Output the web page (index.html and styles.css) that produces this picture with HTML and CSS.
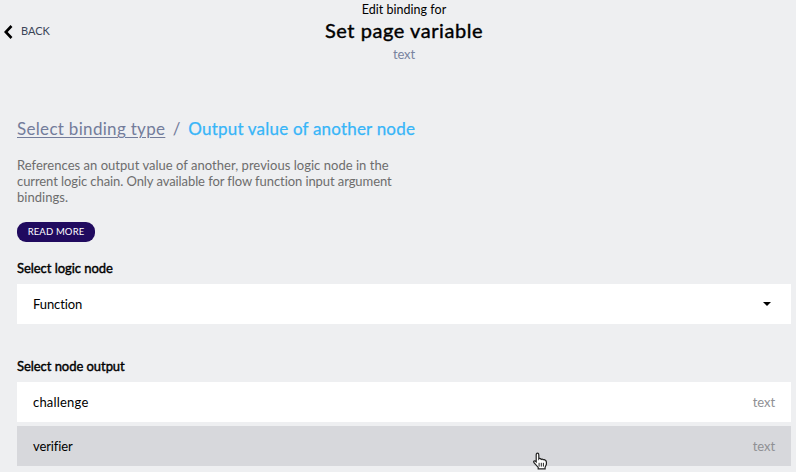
FILE: index.html
```html
<!DOCTYPE html>
<html lang="en">
<head>
<meta charset="utf-8">
<title>Edit binding</title>
<link rel="stylesheet" href="styles.css">
</head>
<body>
<header class="header">
  <a class="back">
    <svg class="back-icon" width="9" height="14" viewBox="0 0 9 14"><path d="M7.5 1 1.8 7l5.7 6" fill="none" stroke="#000" stroke-width="2.6"/></svg>
    <span class="back-label">BACK</span>
  </a>
  <div class="heading">
    <div class="eyebrow">Edit binding for</div>
    <h1 class="title">Set page variable</h1>
    <div class="type">text</div>
  </div>
</header>
<main class="content">
  <nav class="crumbs">
    <a class="crumb-link">Select binding type</a>
    <span class="crumb-slash">/</span>
    <span class="crumb-current">Output value of another node</span>
  </nav>
  <p class="description"><span class="wide">References an output value of another, previous logic node in the</span><br><span class="narrow">current logic chain. Only available for flow function input argument</span><br><span class="wide">bindings.</span></p>
  <a class="read-more"><span>READ MORE</span></a>
  <h2 class="label label-node">Select logic node</h2>
  <div class="row select">
    <span class="function">Function</span>
    <svg class="caret" width="8" height="4" viewBox="0 0 8 4"><path d="M0 0h8L4 4z"/></svg>
  </div>
  <h2 class="label label-output">Select node output</h2>
  <ul class="outputs">
    <li class="row"><span class="challenge">challenge</span><span class="kind">text</span></li>
    <li class="row hovered"><span class="verifier">verifier</span><span class="kind">text</span></li>
  </ul>
</main>
<svg class="cursor" width="17" height="18" viewBox="0 0 17 18"><path d="M4.2 9.8V3q0-1.8 1.3-1.8T6.8 3v4q.8-1 2-.2l.4.6q1.2-.8 2 .3 1.7-.6 2.3.9.9.1.9 1.5v2.2l-1.3 3v1.5H6.2v-1.4L2.2 11Q1.2 9.4 2 9q1-.5 2.2.8z" fill="#fff" stroke="#222" stroke-width="1.2"/><path d="M7.1 10.8v3.8M9.3 10.8v3.8M11.4 10.8v3.8" stroke="#222"/></svg>
</body>
</html>
```

FILE: styles.css
```css
* { box-sizing: border-box; }
body {
  margin: 0;
  height: 472px;
  overflow: hidden;
  background: #eeeff1;
  color: #000;
  font: 13px/16px Lato, "Liberation Sans", sans-serif;
  white-space: nowrap;
}
.header {
  display: grid;
  grid-template-columns: 1fr auto 1fr;
  height: 118px;
  padding: 2px 0 0 4px;
}
.back { display: flex; gap: 8px; height: 16px; margin-top: 21px; align-items: center; color: #3b4558; }
.back-icon { margin-top: 2px; }
.back-label { font-size: 11px; letter-spacing: 0; }
.heading { text-align: center; margin-left: 8px; }
.title { margin: 0 0 4px; font-size: 20px; line-height: 24px; font-weight: 400; letter-spacing: .56px; -webkit-text-stroke: .4px #000; }
.eyebrow { font-size: 12.5px; letter-spacing: .02px; }
.type { color: #78839f; letter-spacing: -.2px; }
.crumbs { display: flex; height: 22px; align-items: center; font-size: 17px; line-height: 20px; letter-spacing: .31px; color: #737c9b; }
.content { padding: 0 5px 0 17px; }
.crumb-link { text-decoration: underline; text-decoration-thickness: 1px; text-underline-offset: 2px; }
.crumb-slash { width: 23px; text-align: center; }
.crumb-current { color: #37b5f8; letter-spacing: .2px; -webkit-text-stroke: .25px #37b5f8; }
.description { margin: 17px 0; color: #6d6d6d; }
.wide { letter-spacing: .03px; }
.narrow { letter-spacing: -.08px; }
.read-more { display: flex; width: 78px; height: 20px; justify-content: center; align-items: center; border-radius: 9px; background: #200a5f; color: #fff; font-size: 9.5px; letter-spacing: .15px; }
.label { margin: 0; font-size: 13px; line-height: 16px; font-weight: 400; letter-spacing: -.05px; -webkit-text-stroke: .4px #000; }
.label-node { margin-top: 18px; }
.label-output { margin-top: 34px; }
.row { display: flex; justify-content: space-between; align-items: center; height: 40px; padding: 0 16px; background: #fff; }
.select { margin-top: 8px; }
.function { letter-spacing: -.1px; }
.challenge { letter-spacing: .2px; }
.verifier { letter-spacing: -.1px; }
.caret { margin-right: 4px; }
.outputs { display: grid; gap: 4px; margin: 8px 0 0; padding: 0; list-style: none; }
.hovered { background: #d7d8dc; }
.kind { color: #8f9094; letter-spacing: -.1px; }
.cursor { position: absolute; left: 532px; top: 452px; }
```
